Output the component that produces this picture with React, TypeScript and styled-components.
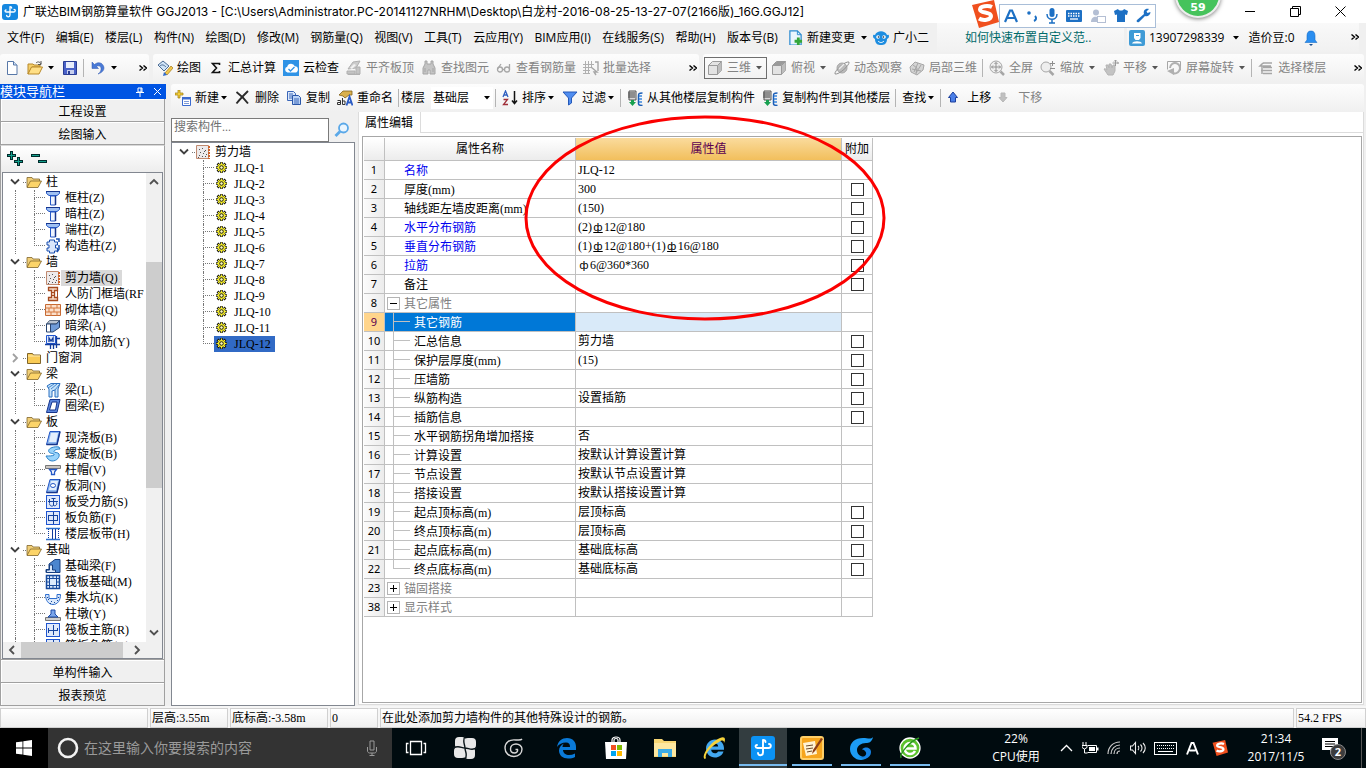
import React from "react";
import styled, { createGlobalStyle } from "styled-components";

const SONG = `"Liberation Serif", "Noto Sans CJK SC", serif`;
const YAHEI = `"Open Sans", "Noto Sans CJK SC", sans-serif`;

const GlobalStyle = createGlobalStyle`
  *, *::before, *::after { box-sizing: border-box; }
  html, body { margin: 0; padding: 0; }
  body { background: #f0f0f0; color: #000; font-family: ${YAHEI}; font-size: 12px; line-height: 16px; }
  button, input { font: inherit; color: inherit; margin: 0; }
  button { border: 0; padding: 0; background: none; text-align: left; white-space: nowrap; }
  a { color: inherit; text-decoration: none; }
  svg { display: block; flex: none; }
`;

/* ---------- icons ---------- */

const B = "#2457c5";
const G = "#a6a6a6";

const slab = (
  <>
    <path d="M5 1.500h10l-3 13H1.500z" fill="#8fb8f0" stroke={B} />
    <path d="M6 3h7l-2 9H4z" fill="#e4effd" />
    <path d="M1.500 14.500h10.500l3-13" fill="none" stroke="#16358c" strokeWidth="1.400" />
  </>
);
const rebarTile = (d: string) => (
  <>
    <rect x="1.500" y="1.500" width="13" height="13" fill="#dfe9fb" stroke="#1f55d0" />
    <path d={d} fill="none" stroke="#15439e" />
  </>
);
const cube = (
  <>
    <path d="M1.500 5.500l4-4h9v9l-4 4h-9z" fill="#e3e3e3" stroke="#9a9a9a" />
    <path d="M10.500 5.500v9l4-4v-9z" fill="#bdbdbd" />
    <path d="M1.500 5.500h9v9M10.500 5.500l4-4" fill="none" stroke="#9a9a9a" />
  </>
);
const floorCopy = (
  <>
    <path d="M2 1h7v9H2z" fill="#d8d8d8" stroke="#555" />
    <path d="M1 3h7M1 5h7M1 7h7" stroke="#444" />
    <path d="M15.500 3c-4 0-4 1-4 3v8c0 1 1 1.500 4 1.500" fill="none" stroke="#1c5fb8" strokeWidth="1.500" />
    <path d="M12 6h3M12 9h3M12 12h3" stroke="#3b86dd" strokeWidth="1.500" />
    <path d="M4 10h3v2h2l-3.500 4L2 12h2z" fill="#18a050" />
  </>
);
const knot = "M12 4v12.500c0 3.500-5 3.500-5 .5M12 12H6.500C4 12 4 9 6 9M12 12h5.500c3 0 3-4 .5-4M12 4c1.500 0 2.500.5 2.500 2";

const ART: Record<string, React.ReactNode> = {
  app: (
    <>
      <rect width="16" height="16" rx="3" fill="#1688e0" />
      <g transform="scale(.667)">
        <path d={knot} fill="none" stroke="#fff" strokeWidth="2" strokeLinecap="round" />
      </g>
    </>
  ),
  newFile: (
    <>
      <path d="M3.500 1.500h6l3.500 3.500v9.500H3.500z" fill="#fff" stroke="#5878a8" />
      <path d="M9.500 1.500V5H13" fill="#cfe0f5" stroke="#5878a8" />
    </>
  ),
  openFolder: (
    <>
      <path d="M1 14V4h5l1 1h6v2H5z" fill="#f5cf6a" stroke="#b8892a" />
      <path d="M1 14l3.500-7H15.500L12 14z" fill="#ffdf86" stroke="#b8892a" />
      <path d="M9 3c2-2 4-1 5 1M14 1v3.500h-3" fill="none" stroke="#555" />
    </>
  ),
  save: (
    <>
      <path d="M1.500 1.500h13v13h-13z" fill="#4a62c8" stroke="#2a3d93" />
      <path d="M4 2h8v6H4z" fill="#e9eefb" />
      <path d="M5 10h7v4H5z" fill="#c7cfee" />
      <path d="M6 11h2v3H6z" fill="#2a3d93" />
    </>
  ),
  undo: <path d="M2 2v6.500h6.500L6.500 6.500c2-1.500 5-.5 4.500 3-.2 2-1.500 3.500-3 4.500 5-1.500 7-5 5.500-8C12 2.500 8 1.500 4.500 4.500z" fill="#4a7ad6" stroke="#2c56b0" strokeWidth=".5" />,
  draw: (
    <>
      <path d="M1 5l5-4 6 5-5 5z" fill="#cfe4f8" stroke="#4a6a92" />
      <path d="M3 6c2-2 4-1 6 1" fill="none" stroke="#4a6a92" />
      <path d="M8 13l6-7 2 2-6 7z" fill="#f2c84a" stroke="#a07618" strokeWidth=".7" />
      <path d="M7 12l3 3-4 1z" fill="#2f6cd0" />
    </>
  ),
  sigma: <path d="M11.500 5V3.500h-7l4 4.500-4 4.500h7V11" fill="none" stroke="#111" strokeWidth="1.600" />,
  cloud: (
    <>
      <rect width="16" height="16" fill="#2f93e6" />
      <path d="M4.500 12.500a3 3 0 01-.3-5.800 4 4 0 017.600-.4 3 3 0 010 6.200z" fill="#fff" />
      <path d="M5.500 9l2 2 4-4" fill="none" stroke="#2f93e6" strokeWidth="1.300" />
    </>
  ),
  flush: (
    <>
      <path d="M2 9l5-7 7-1-4 7z" fill="#ccc" stroke="#b0b0b0" />
      <path d="M4 8l4-4 2 1-4 4z" fill="#f2f2f2" />
      <path d="M1 11h8v3H1zM10 7h4v7h-4zM2 14.500h12" fill="#c4c4c4" stroke="#b0b0b0" />
    </>
  ),
  binoculars: (
    <path d="M4 1h2v3h4V1h2v3l2 4v6H9v-4H7v4H2V8l2-4zM4 8v4M12 8v4" fill="#c4c4c4" stroke={G} />
  ),
  glasses: (
    <g fill="none" stroke={G} strokeWidth="1.300">
      <circle cx="4" cy="9.500" r="2.500" />
      <circle cx="11" cy="9.500" r="2.500" />
      <path d="M1.500 9L5 4M6.500 9.500h2M13.500 9.500V4" />
    </g>
  ),
  batch: (
    <>
      <path d="M2.500 1v13M5.500 1v12M8.500 1v6M0 4.500h11M0 7.500h8M0 10.500h7M0 13.500h7" stroke="#b0b0b0" />
      <path d="M8 7l6 5h-3l2 3M12 2h3v9" fill="none" stroke={G} strokeWidth="1.400" />
    </>
  ),
  cube,
  topView: (
    <>
      {cube}
      <path d="M2 5l4-3.500h8.500l-4 3.500z" fill="#9a9a9a" />
    </>
  ),
  orbit: (
    <>
      <circle cx="8" cy="8" r="5" fill="#bcbcbc" stroke={G} />
      <path d="M1 14C0 11 11 1 15 2c1 3-10 13-14 12z" fill="none" stroke="#929292" />
      <path d="M5 9l5-5" stroke="#eee" strokeWidth="1.500" />
    </>
  ),
  local3d: (
    <>
      <path d="M1 7l5-5 9 3-1 5-6 5-6-3z" fill="#d4d4d4" stroke={G} />
      <path d="M4 5l4 3-1 6M9 3L5 12M12 5l-5 8M3 9l9 2" fill="none" stroke={G} />
    </>
  ),
  fullScreen: (
    <>
      <circle cx="7" cy="7" r="6" fill="#eee" stroke={G} />
      <path d="M7 2.500v9M2.500 7h9M5.500 4L7 2.500 8.500 4M5.500 10L7 11.500 8.500 10M4 5.500L2.500 7 4 8.500M10 5.500L11.500 7 10 8.500" fill="none" stroke="#909090" />
      <path d="M11.500 11.500l3.500 3.500" stroke={G} strokeWidth="2.500" />
    </>
  ),
  zoom: (
    <>
      <circle cx="6" cy="7" r="5" fill="#eee" stroke={G} />
      <path d="M9.500 11l4 4" stroke={G} strokeWidth="2.500" />
      <path d="M10 3.500h5M12.500 1v5M10 8.500h5" stroke="#8e8e8e" />
    </>
  ),
  pan: (
    <>
      <path d="M1 9c2-1 2 1 3 1L3 5h2l1 3V4h2l1 4 1-3h2v6l-2 4H5z" fill="#c3c3c3" stroke="#b4b4b4" />
      <path d="M12.500 0v6M9.500 3h6M11 1.500L12.500 0 14 1.500M14.500 2L15.500 3l-1 1" fill="none" stroke="#9a9a9a" />
    </>
  ),
  rotate: (
    <>
      <path d="M1.500 1.500h13v9M1.500 1.500v8" fill="none" stroke={G} />
      <path d="M4 8a5 5 0 119 3c-1 2-4 3-6 2" fill="none" stroke="#b0b0b0" strokeWidth="2" />
      <path d="M1 11l7-3v7z" fill="#b0b0b0" />
    </>
  ),
  pickFloor: <path d="M5 3h9M5 3L2 6h11M5 7.500h9M3 10.500h11M5 13.500h9M4 6v8" fill="none" stroke={G} strokeWidth="1.500" />,
  newItem: (
    <>
      <path d="M3 0h2v3h3v2H5v3H3V5H0V3h3z" fill="#f4cf3a" stroke="#9b7a10" strokeWidth=".7" />
      <path d="M7.500 7.500h8v8h-8z" fill="#fff" stroke="#3a6ad0" />
      <path d="M7 7h9v2.500H7z" fill="#3a6ad0" />
      <path d="M9 11.500h5M9 13.500h5" stroke="#7f9bd8" />
    </>
  ),
  remove: <path d="M1.500 2C5.500 5 9.500 9 13 13.500M13 1C9 5 5 9 1.500 13.500" fill="none" stroke="#2b2b2b" strokeWidth="1.900" />,
  copy: (
    <>
      <path d="M1.500 1.500h6l2 2v7h-8z" fill="#dbe8fb" stroke="#3a66b8" />
      <path d="M3 4h4M3 6h3M3 8h3" stroke="#3a66b8" />
      <path d="M6.500 5.500h6l2 2v7h-8z" fill="#bcd4f7" stroke="#2a56a8" />
      <path d="M8 9h5M8 11h5M8 13h5" stroke="#3a66b8" />
    </>
  ),
  rename: (
    <>
      <path d="M2 5l4-4h9v4h-3L8 8 6 6z" fill="#d9b04d" stroke="#80601a" strokeWidth=".8" />
      <path d="M.5 10.500h3v4h-3v-2h3M5.500 8v6.500H8V11H5.500" fill="none" stroke="#333" />
      <path d="M9.500 15.500L12.500 6.500l3 9M10.500 12.500h4" fill="none" stroke="#2c5cc4" strokeWidth="1.800" />
    </>
  ),
  sort: (
    <>
      <path d="M1 7l2.500-6L6 7M2 5h3" fill="none" stroke="#2f5fc0" strokeWidth="1.300" />
      <path d="M1.500 9.500h4l-4 5h4.500" fill="none" stroke="#a0303a" strokeWidth="1.300" />
      <path d="M12.500 1v12M10 10.500l2.500 3 2.500-3" fill="none" stroke="#111" strokeWidth="1.500" />
    </>
  ),
  filter: <path d="M1 2h14L9.500 8v5l-3 2V8z" fill="#4f8df0" stroke="#2458b8" />,
  floorCopy,
  up: <path d="M6 2l4.500 5.500H8.500V12h-5V7.500H1.500z" fill="#4a7fe8" stroke="#1c3f9c" />,
  down: <path d="M5 12L1 7.500h2V3h4v4.500h2z" fill="#c0c0c0" stroke="#b8b8b8" />,
  change: (
    <>
      <path d="M2 1h8l4 4v11H2z" fill="#eaf5fd" stroke="#2a8ad0" strokeWidth="1.300" />
      <path d="M10 1v4h4" fill="none" stroke="#2a8ad0" />
      <path d="M9.500 8h3v2.500H15v3h-2.500V16h-3v-2.500H7v-3h2.500z" fill="#35a63a" />
    </>
  ),
  mascot: (
    <>
      <path d="M0 6c0-2 2-1 2-1 2-5 10-5 12 0 0 0 2-1 2 1s-1 2-2 3c0 5-3 6-6 6s-6-1-6-6C1 8 0 8 0 6z" fill="#1d8de0" />
      <circle cx="5" cy="7" r="1.800" fill="#fff" />
      <circle cx="11" cy="7" r="1.800" fill="#fff" />
      <circle cx="5.500" cy="7" r=".8" fill="#123" />
      <circle cx="10.500" cy="7" r=".8" fill="#123" />
      <path d="M5 11c2 2 4 2 6 0" stroke="#fff" fill="none" />
    </>
  ),
  user: (
    <>
      <rect width="16" height="16" rx="2" fill="#3f9bd6" />
      <path d="M5 3h6.500v5l-1.500 2H6.500L5 8z" fill="#fff" />
      <path d="M3 13.500c1-3 9-3 10 0z" fill="#fff" />
      <path d="M7 5.500h3" stroke="#3f9bd6" />
    </>
  ),
  bell: (
    <>
      <path d="M8 1c-3 0-4 2-4 5v4l-2 2.500h12L12 10V6c0-3-1-5-4-5z" fill="#2a8ef0" stroke="#1a6fc8" strokeWidth=".6" />
      <path d="M6 14h4l-2 2z" fill="#1a4f90" />
    </>
  ),
  search: (
    <>
      <circle cx="9.500" cy="6" r="4.500" fill="#eaf5fe" stroke="#5aa8e8" strokeWidth="1.800" />
      <path d="M6 9.500L1.500 14" stroke="#5aa8e8" strokeWidth="2.800" />
    </>
  ),
  /* navigation tree */
  folderOpen: (
    <>
      <path d="M1 13V3.500h5l1 1.500h6.500v2.500" fill="#f1cf78" stroke="#80652a" strokeWidth=".8" />
      <path d="M1 13.500L4.500 7H15.500L12 13.500z" fill="#fcd469" stroke="#80652a" strokeWidth=".8" />
    </>
  ),
  folder: (
    <>
      <path d="M1.500 13.500v-10h5l1 1.500h7v8.500z" fill="#f9cb55" stroke="#80652a" />
      <path d="M2 6h12" stroke="#fdeab2" />
    </>
  ),
  column: (
    <>
      <path d="M1.500 1.500h13v2l-2.500 2H4l-2.500-2z" fill="#9fc0f2" stroke={B} />
      <path d="M5.500 6v9h5V6z" fill="#eef4fe" stroke={B} />
      <path d="M10.500 6v9" stroke="#16358c" strokeWidth="1.500" />
      <path d="M1 1.500h14" stroke="#16358c" />
    </>
  ),
  tieColumn: (
    <>
      <path d="M4.500 2h5v2h3v3h-2v3h2v3h-3v2h-5v-2H2v-3h2V7H2V4h2.500z" fill="#dbe7fb" stroke="#1a4fae" />
      <path d="M11 1h3v3M14 7v4l-2 3" fill="none" stroke="#1a4fae" strokeWidth="1.500" />
    </>
  ),
  shearWall: (
    <>
      <path d="M1.500 1.500h12v13h-12z" fill="#eeeaea" stroke="#c08a70" />
      <path d="M14 2v13" stroke="#d0642a" strokeWidth="2" strokeDasharray="2 1" />
      <path d="M4 5.500h1M7 4.500h1M10 6.500h1M5 8.500h1M8 9.500h1M11 10.500h1M4 11.500h1M7 12.500h1M9 7.500h1M3 13.500h1M10 12.500h1" stroke="#555" />
    </>
  ),
  frameWall: (
    <>
      <path d="M3.500 1.500h9v3h-3v7h3v3h-9v-3h3v-7h-3z" fill="#f7dcc8" stroke="#a64a1e" strokeWidth="1.300" />
      <path d="M12.500 1v14M6 6.500h3M6 9.500h3" stroke="#a64a1e" />
    </>
  ),
  brick: (
    <>
      <path d="M.5 2.500h15v11H.5z" fill="#fbe0cc" stroke="#c66a33" />
      <path d="M1 6h14M1 10h14M6 2v4M12 2v4M4 6v4M9 6v4M6 10v4M12 10v4" stroke="#d5783f" />
    </>
  ),
  beam: (
    <>
      <path d="M1.500 6l3-3.500h10L11 6z" fill="#b7c3d2" stroke="#5a6a80" />
      <path d="M1.500 6h4v8h-4z" fill="#fff" stroke="#26436f" />
      <path d="M5.500 6h6l3-3.500v7L8 14H5.500z" fill="#6f9bd8" stroke="#26436f" />
    </>
  ),
  wallRebar: (
    <>
      <path d="M1.500 1.500h9v8h-9z" fill="#dfe9fb" stroke="#1f55d0" />
      <path d="M4 8V4l2 3 2-3v4M0 10.500h15M11.500 2v12M12 4.500h3M5.500 10v5M8.500 11v4" fill="none" stroke="#123c9c" strokeWidth="1.300" />
    </>
  ),
  beamT: (
    <>
      <path d="M2 4l4-2.500h9L13 7v8h-3V8L7 9v6H4V7z" fill="#c2e2fa" stroke="#2a6fc0" />
      <path d="M3 6l6-4M6 7l6-5M10 8l4-5" stroke="#2a6fc0" strokeWidth=".8" />
    </>
  ),
  ringBeam: (
    <>
      <path d="M5 1.500h10l-3 13H1.500z" fill="#5b86dc" stroke="#16358c" />
      <path d="M7 4h5l-1.500 8h-6z" fill="#fff" stroke="#16358c" />
    </>
  ),
  slab,
  spiral: <path d="M14 1c-6-1-12 2-10 5 1 2 6 1 5 3-1 1-5 1-8 1 1 2 3 5 6 5 5 0 8-4 7-7-1-2-5-1-5-2.500S12 3 15 3z" fill="#9ad4fb" stroke="#2a80c8" />,
  cap: (
    <>
      <path d="M.5 3.500h15v3H.5z" fill="#c9c5c0" stroke="#777" />
      <path d="M4.500 7.500h7L9.500 10v2.500h-3V10z" fill="#fff" stroke={B} strokeWidth="1.300" />
    </>
  ),
  slabHole: (
    <>
      {slab}
      <ellipse cx="8" cy="7.500" rx="2.500" ry="2" fill="#fff" stroke={B} />
    </>
  ),
  rebarS: rebarTile("M3 7.500h10M8.500 4v7.500c-2 1.500-4 0-4-2M8.500 11.500c2 1 4-1 3-3M4.500 5v4M6.500 4.500h4"),
  rebarF: rebarTile("M3 5.500h10M3 10.500h10M8.500 2v12M3.500 5.500v5M12.500 5.500v5"),
  band: (
    <>
      <path d="M1 2.500h14M1 13.500h14" stroke="#2b6fd0" strokeWidth="1.600" />
      <path d="M7.500 3v10M10.500 3v10" stroke="#123c9c" />
      <path d="M3.500 3v10M13.500 3v10" stroke="#123c9c" strokeDasharray="1 1" />
    </>
  ),
  foundationBeam: (
    <>
      <path d="M1 14.500v-3h3V6l6-4.500h5v13z" fill="#4c86cf" stroke="#173f80" />
      <path d="M1.500 12h3V7h3v5h3v2.500h-9z" fill="#dbe9fb" stroke="#173f80" />
    </>
  ),
  raft: (
    <>
      <rect x="1.500" y="1.500" width="13" height="13" fill="#dceafb" stroke="#174a9c" strokeWidth="1.500" />
      <path d="M4.500 1v14M11.500 1v14M1 4.500h14M1 11.500h14M8 1v3M8 12v3M1 8h3M12 8h3" stroke="#174a9c" />
    </>
  ),
  pit: (
    <>
      <path d="M.5 4.500H4v4h8v-4h3.500c0 6-3 10-7.500 10S.5 10.500.5 4.500z" fill="#dbe9fb" stroke="#2f6fd0" />
      <path d="M3 9.500h1M6 11.500h1M9 12.500h1M12 10.500h1M5 13.500h1M2 7.500h1M13 7.500h1" stroke="#174a9c" />
    </>
  ),
  pier: (
    <>
      <path d="M.5 11.500h15v3H.5z" fill="#cfcfcf" stroke="#777" />
      <path d="M3 11l3-3V4h4v4l3 3z" fill="#7aa5ea" stroke="#1b4aa8" />
    </>
  ),
  rebarR: rebarTile("M3.500 8.500h9.500M8.500 3v10M3.500 6v5M12.500 8.500V6"),
  gear: (
    <>
      <path d="M7.500 2v11M2 7.500h11M3.500 3.500l8 8M11.500 3.500l-8 8" stroke="#1c1c10" strokeWidth="2.600" />
      <circle cx="7.500" cy="7.500" r="3.600" fill="#f6ee2c" />
      <path d="M7.500 2.500v10M2.500 7.500h10M4 4l7 7M11 4l-7 7" stroke="#f6ee2c" />
      <circle cx="7.500" cy="7.500" r="1.800" fill="#fbf8b8" stroke="#1c1c10" />
    </>
  ),
};

function Icon({ name, size = 16 }: { name: string; size?: number }) {
  return (
    <svg width={size} height={size} viewBox="0 0 16 16" aria-hidden="true">
      {ART[name]}
    </svg>
  );
}

const CaretSvg = styled.svg<{ $gap: number }>`
  margin-left: ${(p) => p.$gap}px;
`;
function Caret({ color = "#000", gap = 5 }: { color?: string; gap?: number }) {
  return (
    <CaretSvg width="7" height="4" viewBox="0 0 7 4" $gap={gap} aria-hidden="true">
      <path d="M0 0h6L3 3.500z" fill={color} />
    </CaretSvg>
  );
}
function More() {
  return (
    <svg width="8" height="7" viewBox="0 0 8 7" aria-hidden="true">
      <path d="M.5.500l3 2.500-3 2.500M4.500.500l3 2.500-3 2.500" fill="none" stroke="#000" strokeWidth="1.400" />
    </svg>
  );
}
function Chevron({ turn = "down", color = "#404040" }: { turn?: "down" | "up" | "left" | "right"; color?: string }) {
  const paths = {
    down: "M1 2.500l4 4 4-4",
    up: "M1 7l4-4 4 4",
    left: "M7 1L3 5l4 4",
    right: "M3 1l4 4-4 4",
  };
  return (
    <svg width="10" height="10" viewBox="0 0 10 10" aria-hidden="true">
      <path d={paths[turn]} fill="none" stroke={color} strokeWidth="1.800" />
    </svg>
  );
}

/* ---------- window frame ---------- */

const Screen = styled.div`
  position: relative;
  display: flex;
  flex-direction: column;
  height: 100vh;
  overflow: hidden;
`;
const TitleBar = styled.header`
  display: flex;
  align-items: center;
  height: 23px;
  flex: none;
  padding: 0 20px 0 2px;
  gap: 5px;
  background: #fff;
  white-space: nowrap;
`;
const Title = styled.h1`
  flex: 1;
  margin: 0;
  font-size: 12px;
  font-weight: 400;
  font-family: Inter, "Noto Sans CJK SC", sans-serif;
`;
const WindowButtons = styled.div`
  display: flex;
  gap: 34px;
`;

const MenuBar = styled.nav`
  display: flex;
  height: 31px;
  flex: none;
  padding: 0 4px 2px 7px;
  white-space: nowrap;
`;
const MenuList = styled.div`
  display: flex;
  align-items: center;
  justify-content: space-between;
  width: 771px;
  margin-right: 10px;
`;
const MenuExtras = styled.div`
  display: flex;
  align-items: center;
  gap: 5px;
  width: 149px;
`;
const MenuButton = styled.button`
  display: flex;
  align-items: center;
  gap: 4px;
`;
const MenuStrip = styled.div<{ $width?: number }>`
  display: flex;
  align-items: center;
  gap: 8px;
  width: ${(p) => (p.$width ? `${p.$width}px` : "auto")};
  flex: ${(p) => (p.$width ? "none" : "1")};
  margin-right: 3px;
  padding-left: 2px;
  background: linear-gradient(#f9f9f9, #f1f1f1);
`;
const TipLink = styled.a`
  margin-left: 26px;
  color: #006a6a;
`;
const PushEnd = styled.span`
  margin-left: auto;
`;

const ToolRow = styled.div`
  display: flex;
  height: 28px;
  flex: none;
  gap: 4px;
  margin-bottom: 2px;
  padding-right: 2px;
`;
const ToolGroup = styled.div<{ $width?: number; $pad?: number }>`
  display: flex;
  align-items: center;
  width: ${(p) => (p.$width ? `${p.$width}px` : "auto")};
  flex: ${(p) => (p.$width ? "none" : "1")};
  padding: 0 2px 0 ${(p) => p.$pad ?? 0}px;
  background: linear-gradient(#fdfdfd, #f0f0f0);
  border-radius: 3px;
  white-space: nowrap;
`;
const SecondBar = styled(ToolGroup)`
  height: 28px;
  flex: none;
`;
const ToolButton = styled.button<{ $off?: boolean; $pressed?: boolean }>`
  display: flex;
  align-items: center;
  height: 22px;
  padding: 0 3px 0 ${(p) => (p.$pressed ? 2 : 4)}px;
  border: ${(p) => (p.$pressed ? "1px solid #6e6e6e" : "0")};
  color: ${(p) => (p.$off ? "#838383" : "#000")};
`;
const ToolText = styled.span<{ $alone?: boolean }>`
  margin-left: ${(p) => (p.$alone ? 0 : 4)}px;
`;
const ToolSep = styled.span`
  width: 1px;
  height: 18px;
  margin: 0 2px;
  background: #b4b4b4;
`;

type Tool = { icon?: string; text?: string; caret?: boolean; off?: boolean; pressed?: boolean; sep?: boolean };
function Tools({ items, caretGap = 5 }: { items: Tool[]; caretGap?: number }) {
  return (
    <>
      {items.map((t, i) =>
        t.sep ? (
          <ToolSep key={i} />
        ) : (
          <ToolButton key={i} type="button" $off={t.off} $pressed={t.pressed} aria-label={t.text ?? t.icon}>
            {t.icon && <Icon name={t.icon} />}
            {t.text && <ToolText $alone={!t.icon}>{t.text}</ToolText>}
            {t.caret && <Caret gap={caretGap} color={t.off ? "#555" : "#000"} />}
          </ToolButton>
        )
      )}
    </>
  );
}

const MENUS = ["文件(F)", "编辑(E)", "楼层(L)", "构件(N)", "绘图(D)", "修改(M)", "钢筋量(Q)", "视图(V)", "工具(T)", "云应用(Y)", "BIM应用(I)", "在线服务(S)", "帮助(H)", "版本号(B)"];
const FILE_TOOLS: Tool[] = [{ icon: "newFile" }, { icon: "openFolder", caret: true }, { icon: "save" }, { sep: true }, { icon: "undo", caret: true }];
const DRAW_TOOLS: Tool[] = [
  { icon: "draw", text: "绘图" },
  { icon: "sigma", text: "汇总计算" },
  { icon: "cloud", text: "云检查" },
  { icon: "flush", text: "平齐板顶", off: true },
  { icon: "binoculars", text: "查找图元", off: true },
  { icon: "glasses", text: "查看钢筋量", off: true },
  { icon: "batch", text: "批量选择", off: true },
];
const VIEW_TOOLS: Tool[] = [
  { icon: "cube", text: "三维", caret: true, off: true, pressed: true },
  { icon: "topView", text: "俯视", caret: true, off: true },
  { icon: "orbit", text: "动态观察", off: true },
  { icon: "local3d", text: "局部三维", off: true },
  { sep: true },
  { icon: "fullScreen", text: "全屏", off: true },
  { icon: "zoom", text: "缩放", caret: true, off: true },
  { icon: "pan", text: "平移", caret: true, off: true },
  { icon: "rotate", text: "屏幕旋转", caret: true, off: true },
  { sep: true },
  { icon: "pickFloor", text: "选择楼层", off: true },
];

/* ---------- left navigation ---------- */

const Body = styled.main`
  display: flex;
  flex: 1;
  min-height: 0;
  gap: 5px;
  padding-right: 2px;
`;
const Nav = styled.aside`
  display: flex;
  flex-direction: column;
  width: 166px;
  flex: none;
  font-family: ${SONG};
`;
const NavTitle = styled.h2`
  display: flex;
  align-items: center;
  gap: 9px;
  height: 15px;
  margin: 0;
  padding-right: 4px;
  background: #0054e3;
  color: #fff;
  font-size: 13px;
  font-weight: 400;
`;
const NavButton = styled.button`
  height: 23px;
  flex: none;
  margin-right: 1px;
  padding-top: 3px;
  border: 1px solid #a0a0a0;
  border-width: 0 1px 1px;
  box-shadow: inset 1px 1px #fff;
  text-align: center;
`;
const NavBox = styled.section`
  display: flex;
  flex-direction: column;
  flex: 1;
  min-height: 0;
  margin-right: 1px;
  border: 1px solid #a0a0a0;
  border-top-color: #d8d8d8;
`;
const NavTools = styled.div`
  display: flex;
  align-items: center;
  gap: 7px;
  height: 26px;
  flex: none;
  padding-left: 6px;
  background: linear-gradient(#fff, #ededed);
`;
const NavTree = styled.div`
  display: grid;
  grid-template-columns: minmax(0, 1fr) 16px;
  grid-template-rows: minmax(0, 1fr) 16px;
  flex: 1;
  min-height: 0;
  margin: 0 1px;
  border: 1px solid #828790;
  background: #fff;
`;
const TreeView = styled.ul`
  margin: 0;
  padding: 1px 0 0;
  overflow: hidden;
  list-style: none;
`;
const TreeRow = styled.li<{ $pad: number }>`
  display: flex;
  align-items: center;
  height: 16px;
  padding-left: ${(p) => p.$pad}px;
  white-space: nowrap;
`;
const Dash = styled.span`
  width: 3px;
  margin-left: 3px;
  border-top: 1px dotted #777;
`;
const Rail = styled.span`
  width: 19px;
  height: 16px;
  flex: none;
  border-left: 1px dotted #777;
`;
const Elbow = styled.span<{ $last?: boolean }>`
  display: flex;
  flex-direction: column;
  flex: none;
  width: 11px;
  height: 16px;
  &::before, &::after {
    content: "";
    height: 8px;
    border-left: 1px dotted #777;
  }
  &::before { border-bottom: 1px dotted #777; }
  &::after { border-left-color: ${(p) => (p.$last ? "transparent" : "#777")}; }
`;
const TreeText = styled.span<{ $mark?: string }>`
  height: 16px;
  padding: 0 4px;
  background: ${(p) => p.$mark ?? "transparent"};
`;
const Marked = styled.span<{ $on?: boolean }>`
  display: flex;
  background: ${(p) => (p.$on ? "#316ac5" : "transparent")};
`;
const BarV = styled.div`
  display: flex;
  flex-direction: column;
  align-items: center;
  background: #f0f0f0;
  padding: 4px 0;
`;
const BarH = styled.div`
  display: flex;
  align-items: center;
  grid-column: 1 / -1;
  padding-right: 20px;
  background: #f0f0f0;
`;
const ThumbV = styled.div`
  width: 16px;
  height: 49%;
  margin-top: 75px;
  margin-bottom: auto;
  background: #cdcdcd;
`;
const ThumbH = styled.div`
  width: 102px;
  height: 16px;
  margin-left: 4px;
  margin-right: auto;
  background: #cdcdcd;
`;
const ArrowPad = styled.span`
  padding-left: 4px;
`;

type Branch = { name: string; closed?: boolean; items?: [string, string][] };
const TREE: Branch[] = [
  { name: "柱", items: [["column", "框柱(Z)"], ["column", "暗柱(Z)"], ["column", "端柱(Z)"], ["tieColumn", "构造柱(Z)"]] },
  { name: "墙", items: [["shearWall", "剪力墙(Q)"], ["frameWall", "人防门框墙(RF"], ["brick", "砌体墙(Q)"], ["beam", "暗梁(A)"], ["wallRebar", "砌体加筋(Y)"]] },
  { name: "门窗洞", closed: true },
  { name: "梁", items: [["beamT", "梁(L)"], ["ringBeam", "圈梁(E)"]] },
  { name: "板", items: [["slab", "现浇板(B)"], ["spiral", "螺旋板(B)"], ["cap", "柱帽(V)"], ["slabHole", "板洞(N)"], ["rebarS", "板受力筋(S)"], ["rebarF", "板负筋(F)"], ["band", "楼层板带(H)"]] },
  { name: "基础", items: [["foundationBeam", "基础梁(F)"], ["raft", "筏板基础(M)"], ["pit", "集水坑(K)"], ["pier", "柱墩(Y)"], ["rebarR", "筏板主筋(R)"], ["rebarF", "筏板负筋(X)"]] },
];

function NavPanel() {
  return (
    <Nav>
      <NavTitle>
        模块导航栏
        <PushEnd>
          <svg width="8" height="10" viewBox="0 0 8 10"><path d="M2 1h4v4H2zM5 1v4M0 5.500h8M4 6v4" fill="none" stroke="#fff" /></svg>
        </PushEnd>
        <svg width="9" height="9" viewBox="0 0 9 9"><path d="M1 1l7 7M8 1L1 8" stroke="#fff" /></svg>
      </NavTitle>
      <NavButton type="button">工程设置</NavButton>
      <NavButton type="button">绘图输入</NavButton>
      <NavBox>
        <NavTools>
          <svg width="17" height="16" viewBox="0 0 17 16"><path d="M4.500 0v9M0 4.500h9M11.500 6v9M7 10.500h9" stroke="#002b2b" strokeWidth="3" /><path d="M4.500 1v7M1 4.500h7M11.500 7v7M8 10.500h7" stroke="#13a08c" /></svg>
          <svg width="17" height="16" viewBox="0 0 17 16"><path d="M0 4.500h9M7 10.500h9" stroke="#002b2b" strokeWidth="3" /><path d="M1 4.500h7M8 10.500h7" stroke="#13a08c" /></svg>
        </NavTools>
        <NavTree>
          <TreeView>
            {TREE.map((b) => (
              <React.Fragment key={b.name}>
                <TreeRow $pad={7}>
                  <Chevron turn={b.closed ? "right" : "down"} color={b.closed ? "#a0a0a0" : "#404040"} />
                  <Dash />
                  <Icon name={b.closed ? "folder" : "folderOpen"} />
                  <TreeText>{b.name}</TreeText>
                </TreeRow>
                {b.items?.map(([icon, text], i) => (
                  <TreeRow key={text} $pad={12}>
                    <Rail />
                    <Elbow $last={i === b.items!.length - 1 && b.name !== "基础"} />
                    <Icon name={icon} />
                    <TreeText $mark={text === "剪力墙(Q)" ? "#d9d9d9" : undefined}>{text}</TreeText>
                  </TreeRow>
                ))}
              </React.Fragment>
            ))}
          </TreeView>
          <BarV>
            <Chevron turn="up" color="#505050" />
            <ThumbV />
            <Chevron color="#505050" />
          </BarV>
          <BarH>
            <ArrowPad><Chevron turn="left" color="#505050" /></ArrowPad>
            <ThumbH />
            <Chevron turn="right" color="#505050" />
          </BarH>
        </NavTree>
      </NavBox>
      <NavButton type="button">单构件输入</NavButton>
      <NavButton type="button">报表预览</NavButton>
    </Nav>
  );
}

/* ---------- component list ---------- */

const Work = styled.div`
  display: flex;
  flex-direction: column;
  flex: 1;
  min-width: 0;
`;
const Panels = styled.div`
  display: flex;
  flex: 1;
  min-height: 0;
  gap: 3px;
`;
const FloorLabel = styled.label`
  display: flex;
  align-items: center;
  gap: 6px;
`;
const FloorBox = styled.span`
  display: flex;
  align-items: center;
  width: 62px;
  height: 22px;
  padding-right: 2px;
  background: #fff;
`;
const FloorSelect = styled.select`
  flex: 1;
  min-width: 0;
  padding: 0 2px;
  border: 0;
  appearance: none;
  background: transparent;
  font: inherit;
`;
const ListPanel = styled.section`
  display: flex;
  flex-direction: column;
  width: 184px;
  flex: none;
  padding-top: 5px;
`;
const SearchRow = styled.div`
  display: flex;
  align-items: center;
  gap: 5px;
  height: 25px;
  flex: none;
`;
const SearchInput = styled.input`
  width: 158px;
  height: 24px;
  padding: 0 2px 4px;
  border: 1px solid #7a7a7a;
  background: #fff;
  font-family: ${SONG};
  &::placeholder { color: #707070; opacity: 1; }
`;
const ListBox = styled.div`
  flex: 1;
  min-height: 0;
  overflow: hidden;
  border: 1px solid #828790;
  background: #fff;
  font-family: ${SONG};
`;

const COMPONENTS = Array.from({ length: 12 }, (_, i) => `JLQ-${i + 1}`);

function ComponentList() {
  return (
    <ListPanel>
      <SearchRow>
        <SearchInput aria-label="搜索构件" placeholder="搜索构件..." />
        <button type="button" aria-label="搜索"><Icon name="search" /></button>
      </SearchRow>
      <ListBox>
        <TreeView>
          <TreeRow $pad={7}>
            <Chevron />
            <Dash />
            <Icon name="shearWall" />
            <TreeText>剪力墙</TreeText>
          </TreeRow>
          {COMPONENTS.map((name, i) => (
            <TreeRow key={name} $pad={31}>
              <Elbow $last={i === COMPONENTS.length - 1} />
              <Marked $on={i === COMPONENTS.length - 1}>
                <Icon name="gear" />
                <TreeText>{name}</TreeText>
              </Marked>
            </TreeRow>
          ))}
        </TreeView>
      </ListBox>
    </ListPanel>
  );
}

/* ---------- property sheet ---------- */

const SheetPanel = styled.section`
  position: relative;
  display: flex;
  flex-direction: column;
  flex: 1;
  min-width: 0;
  margin-bottom: 1px;
  border: 1px solid #dcdcdc;
  border-top: 0;
  background: #fff;
  font-family: ${SONG};
`;
const TabStrip = styled.div`
  display: flex;
  height: 21px;
  flex: none;
`;
const Tab = styled.button`
  padding: 0 7px 0 6px;
  border-right: 1px solid #dcdcdc;
`;
const TabRest = styled.div`
  flex: 1;
  border-bottom: 1px solid #dcdcdc;
`;
const SheetBox = styled.div`
  flex: 1;
  min-height: 0;
  margin: 3px 1px 1px 3px;
  padding: 1px;
  overflow: hidden;
  border: 1px solid #a7a7a7;
`;
const Sheet = styled.table`
  width: 509px;
  table-layout: fixed;
  border-spacing: 0;
  line-height: 18px;
`;
const HeadCell = styled.th<{ $width: number; $hot?: boolean }>`
  width: ${(p) => p.$width}px;
  height: 23px;
  padding: 0;
  border: 1px solid #c0c0c0;
  border-width: 0 1px 1px 0;
  background: ${(p) => (p.$hot ? "linear-gradient(#fadb9d, #f2bf5c)" : "linear-gradient(#fff, #ececec)")};
  color: ${(p) => (p.$hot ? "#5a0050" : "#000")};
  font-weight: 400;
`;
const NumCell = styled.th<{ $on?: boolean }>`
  height: 19px;
  padding: 0;
  border: 1px solid #c0c0c0;
  border-width: 0 1px 1px 0;
  background: ${(p) => (p.$on ? "#ffd58c" : "linear-gradient(90deg, #fbfbfb, #ececec)")};
  color: ${(p) => (p.$on ? "#5a0050" : "#000")};
  font: 400 11px/18px "Noto Sans", sans-serif;
  text-align: center;
`;
const Cell = styled.td<{ $fill?: string }>`
  height: 19px;
  padding: 0;
  border: 1px solid #c0c0c0;
  border-width: 0 1px 1px 0;
  background: ${(p) => p.$fill ?? "#fff"};
  white-space: nowrap;
  overflow: hidden;
`;
const NameLine = styled.div<{ $pad: number; $color?: string }>`
  display: flex;
  align-items: center;
  gap: 4px;
  height: 18px;
  padding-left: ${(p) => p.$pad}px;
  color: ${(p) => p.$color ?? "#000"};
`;
const NameText = styled.span`
  line-height: 16px;
  padding-top: 2px;
`;
const Branchlet = styled.span<{ $last?: boolean }>`
  display: flex;
  flex-direction: column;
  width: 17px;
  height: 18px;
  &::before, &::after {
    content: "";
    height: 9px;
    border-left: 1px solid #c0c0c0;
  }
  &::before { border-bottom: 1px solid #c0c0c0; }
  &::after { border-left-color: ${(p) => (p.$last ? "transparent" : "#c0c0c0")}; }
`;
const ExpandButton = styled.button`
  width: 13px;
  height: 13px;
  border: 1px solid #b4b4b4;
  background: #fff;
`;
const ValueLine = styled.div`
  height: 18px;
  padding-left: 2px;
`;
const Grade = styled.span<{ $ribbed?: boolean }>`
  display: inline-block;
  width: 12px;
  height: 13px;
  font-family: "DejaVu Sans", sans-serif;
  font-size: 11px;
  line-height: 13px;
  text-align: center;
  text-decoration: ${(p) => (p.$ribbed ? "underline" : "none")};
  text-decoration-skip-ink: none;
  text-underline-offset: 1px;
`;
const CheckLine = styled.div`
  display: flex;
  align-items: center;
  justify-content: center;
  height: 18px;
`;
const Check = styled.input`
  width: 13px;
  height: 13px;
  border: 1px solid #333;
  appearance: none;
  background: #fff;
`;
const Ring = styled.svg`
  position: absolute;
  top: 3px;
  left: 165px;
  pointer-events: none;
`;

type Row = { n: number; name: string; value?: React.ReactNode; check?: boolean; blue?: boolean; group?: "+" | "-"; child?: boolean; on?: boolean };
const ribbed = <Grade $ribbed>ф</Grade>;
const ROWS: Row[] = [
  { n: 1, name: "名称", value: "JLQ-12", blue: true },
  { n: 2, name: "厚度(mm)", value: "300", check: true },
  { n: 3, name: "轴线距左墙皮距离(mm)", value: "(150)", check: true },
  { n: 4, name: "水平分布钢筋", value: <>(2){ribbed}12@180</>, check: true, blue: true },
  { n: 5, name: "垂直分布钢筋", value: <>(1){ribbed}12@180+(1){ribbed}16@180</>, check: true, blue: true },
  { n: 6, name: "拉筋", value: <><Grade>ф</Grade>6@360*360</>, check: true, blue: true },
  { n: 7, name: "备注", check: true },
  { n: 8, name: "其它属性", group: "-" },
  { n: 9, name: "其它钢筋", child: true, on: true },
  { n: 10, name: "汇总信息", value: "剪力墙", child: true, check: true },
  { n: 11, name: "保护层厚度(mm)", value: "(15)", child: true, check: true },
  { n: 12, name: "压墙筋", child: true, check: true },
  { n: 13, name: "纵筋构造", value: "设置插筋", child: true, check: true },
  { n: 14, name: "插筋信息", child: true, check: true },
  { n: 15, name: "水平钢筋拐角增加搭接", value: "否", child: true },
  { n: 16, name: "计算设置", value: "按默认计算设置计算", child: true },
  { n: 17, name: "节点设置", value: "按默认节点设置计算", child: true },
  { n: 18, name: "搭接设置", value: "按默认搭接设置计算", child: true },
  { n: 19, name: "起点顶标高(m)", value: "层顶标高", child: true, check: true },
  { n: 20, name: "终点顶标高(m)", value: "层顶标高", child: true, check: true },
  { n: 21, name: "起点底标高(m)", value: "基础底标高", child: true, check: true },
  { n: 22, name: "终点底标高(m)", value: "基础底标高", child: true, check: true },
  { n: 23, name: "锚固搭接", group: "+" },
  { n: 38, name: "显示样式", group: "+" },
];

function PropertySheet() {
  return (
    <SheetPanel>
      <TabStrip role="tablist">
        <Tab type="button" role="tab" aria-selected="true">属性编辑</Tab>
        <TabRest />
      </TabStrip>
      <SheetBox>
        <Sheet>
          <thead>
            <tr>
              <HeadCell $width={21} aria-label="行号" />
              <HeadCell $width={191}>属性名称</HeadCell>
              <HeadCell $width={266} $hot>属性值</HeadCell>
              <HeadCell $width={31}>附加</HeadCell>
            </tr>
          </thead>
          <tbody>
            {ROWS.map((r) => (
              <tr key={r.n}>
                <NumCell $on={r.on}>{r.n}</NumCell>
                <Cell $fill={r.on ? "#0078d7" : undefined}>
                  <NameLine $pad={r.group ? 2 : r.child ? 8 : 19} $color={r.on ? "#fff" : r.group ? "#808080" : r.blue ? "#0000f0" : undefined}>
                    {r.group && (
                      <ExpandButton type="button" aria-label={r.name}>
                        <svg width="11" height="11" viewBox="0 0 11 11">
                          <path d={r.group === "+" ? "M2 5.500h7M5.500 2v7" : "M2 5.500h7"} stroke="#000" />
                        </svg>
                      </ExpandButton>
                    )}
                    {r.child && <Branchlet $last={r.n === 22} />}
                    <NameText>{r.name}</NameText>
                  </NameLine>
                </Cell>
                <Cell $fill={r.on ? "#d9eaf9" : undefined}>
                  <ValueLine>{r.value}</ValueLine>
                </Cell>
                <Cell>
                  <CheckLine>{r.check && <Check type="checkbox" aria-label={`附加 ${r.name}`} />}</CheckLine>
                </Cell>
              </tr>
            ))}
          </tbody>
        </Sheet>
      </SheetBox>
      <Ring width="364" height="206" viewBox="0 0 364 206" aria-hidden="true">
        <ellipse cx="181" cy="103" rx="179" ry="101" fill="none" stroke="#fb0000" strokeWidth="3" />
      </Ring>
    </SheetPanel>
  );
}

/* ---------- status bar ---------- */

const StatusBar = styled.footer`
  display: flex;
  gap: 2px;
  height: 22px;
  flex: none;
  padding-top: 2px;
  background: #f6f6f6;
  font-family: ${SONG};
`;
const StatusCell = styled.div<{ $width?: number }>`
  width: ${(p) => (p.$width ? `${p.$width}px` : "auto")};
  flex: ${(p) => (p.$width ? "none" : "1")};
  padding: 1px;
  border: 1px solid #d0d0d0;
  background: linear-gradient(#fff, #f0f0f0);
  white-space: nowrap;
`;

/* ---------- desktop task bar ---------- */

const TaskBar = styled.footer`
  display: flex;
  height: 40px;
  flex: none;
  background: #000b0f;
  color: #fff;
`;
const StartButton = styled.button`
  display: flex;
  align-items: center;
  justify-content: center;
  width: 48px;
  background: #000;
`;
const Cortana = styled.label`
  display: flex;
  align-items: center;
  gap: 5px;
  width: 344px;
  padding: 0 14px 0 9px;
  background: #333;
`;
const CortanaInput = styled.input`
  flex: 1;
  min-width: 0;
  padding: 0;
  border: 0;
  background: transparent;
  font-size: 14px;
  &::placeholder { color: #9a9a9a; opacity: 1; }
`;
const TaskGroup = styled.div`
  display: flex;
  gap: 1px;
  margin-right: 5px;
`;
const TaskButton = styled.button<{ $active?: boolean; $open?: boolean }>`
  display: flex;
  flex-direction: column;
  align-items: center;
  justify-content: center;
  width: 48px;
  height: 40px;
  background: ${(p) => (p.$active ? "#333d40" : "transparent")};
  &::after {
    content: "";
    width: ${(p) => (p.$active ? 48 : 40)}px;
    height: 2px;
    margin-bottom: -6px;
    margin-top: 4px;
    background: ${(p) => (p.$open ? "#76b9ed" : "transparent")};
  }
`;
const Tray = styled.div`
  display: flex;
  align-items: stretch;
  margin-left: auto;
  padding-right: 4px;
`;
const TraySlot = styled.div<{ $width: number }>`
  display: flex;
  align-items: center;
  justify-content: center;
  width: ${(p) => p.$width}px;
  text-align: center;
  line-height: 18px;
`;
const ShowDesktop = styled.span`
  width: 1px;
  margin-left: 9px;
  background: #555;
`;

const taskArt: Record<string, React.ReactNode> = {
  taskView: (
    <svg width="22" height="16" viewBox="0 0 22 16"><path d="M5.500 1.500h11v13h-11zM3.500 3.500h-2v9h2M18.500 3.500h2v9h-2" fill="none" stroke="#fff" strokeWidth="1.300" /></svg>
  ),
  flower: (
    <svg width="24" height="24" viewBox="0 0 24 24">
      <g fill="#e8e8e8">
        <rect x="2" y="1" width="11" height="12" rx="4" />
        <rect x="11" y="2" width="12" height="11" rx="4" />
        <rect x="11" y="11" width="11" height="12" rx="4" />
        <rect x="1" y="11" width="12" height="11" rx="4" />
      </g>
      <path d="M12 12C12 8 9 6 12 0M12 12c4 0 6 3 12 0M12 12c0 4 3 6 0 12M12 12c-4 0-6-3-12 0" fill="none" stroke="#0a1519" strokeWidth="1.400" />
    </svg>
  ),
  swirl: (
    <svg width="24" height="24" viewBox="0 0 24 24"><path d="M20 3c-1 1.500-3 1-6 1C7 3 3 7 3 12c0 5 4 8.500 9 8.500S20 17 20 13c0-3-3-5-6-5s-5.500 2-5.500 5 2 4 4 4 3.500-1.500 3-3.500h-2" fill="none" stroke="#d8d8d8" strokeWidth="1.400" /></svg>
  ),
  edge: (
    <svg width="22" height="22" viewBox="0 0 22 22"><path d="M1 10C2 4 6 1 11 1c6 0 9 4 9 9v3H7c0 3 3 5 6 5 2 0 4-.5 6-1.500V20c-2 1-4 1.500-7 1.500-5 0-9-3-9-8 0-3 2-5.500 5-7-1 1-1.500 2-1.500 3.500H14c0-3-1-4.500-4-4.500C6 5.500 3 7 1 10z" fill="#0a7ad8" /></svg>
  ),
  store: (
    <svg width="24" height="24" viewBox="0 0 24 24"><path d="M8 7V4c0-4 8-4 8 0v3M10 6V4c0-2 4-2 4 0v2" fill="none" stroke="#fff" strokeWidth="1.200" /><path d="M1 6h22l-1 17H2z" fill="#fff" /><path d="M7 9h5v5H7z" fill="#f25022" /><path d="M13 9h5v5h-5z" fill="#7fba00" /><path d="M7 15h5v5H7z" fill="#00a4ef" /><path d="M13 15h5v5h-5z" fill="#ffb900" /></svg>
  ),
  explorer: (
    <svg width="22" height="20" viewBox="0 0 22 20"><path d="M0 1h8l2 2h12v16H0z" fill="#f7d674" /><path d="M0 5h22v13H0z" fill="#fde7a0" /><path d="M4 19v-8h14v8h-4v-4H8v4z" fill="#3cabe6" /></svg>
  ),
  ie: (
    <svg width="24" height="24" viewBox="0 0 24 24"><path d="M13 3.500c-5 0-9 4-9 9s4 9 9 9c4 0 7.500-2.500 8.500-6H16c-.5 1-1.500 1.800-3 1.800-2.200 0-3.800-1.500-3.800-3.500H22C22.500 8 19 3.500 13 3.500zM9.500 10.500c.5-2 1.500-3 3.500-3s3 1 3.200 3z" fill="#43a8f0" /><path d="M3 23C-2 21 8 6 18 2c5-2 6 1 4 5 0-3-2-3-5-1C9 10 2 19 4 22z" fill="#f6d33c" /></svg>
  ),
  glodon: (
    <svg width="24" height="24" viewBox="0 0 24 24"><rect width="24" height="24" rx="3" fill="#0b92f4" /><path d={knot} fill="none" stroke="#fff" strokeWidth="1.900" strokeLinecap="round" /></svg>
  ),
  note: (
    <svg width="24" height="24" viewBox="0 0 24 24"><rect x="1" y="1" width="22" height="22" rx="2" fill="#f6a51c" stroke="#ffcf67" strokeWidth="2" /><path d="M3 7l12-2 2 13-11 2z" fill="#fff3d4" /><path d="M6 10l7-1M6 13l7-1M7 16l5-1" stroke="#6b4a2c" /><path d="M21 2l-8 12-1 4 3-3 8-12z" fill="#8c3d16" /></svg>
  ),
  swirlBlue: (
    <svg width="24" height="24" viewBox="0 0 24 24">
      <path d="M24 1c-2 2.500-5 1-10 1C6 2 1 6.500 1 13c0 6 5 11 11 11 2 0 5-1 7-3-6 1-11-2-11-7 0-4 4-7 9-7 3 0 6-1 7-6z" fill="#1c9cf4" />
      <path d="M13 13.500c3-3.500 9-2 9 2.500 0 3-2 5.500-5 6.500-2 .5-6 0-7-2 4 1 8-.5 7-4-.5-1.500-2-3-4-3z" fill="#1583e6" />
    </svg>
  ),
  greenE: (
    <svg width="24" height="24" viewBox="0 0 24 24"><circle cx="12" cy="12" r="10" fill="#5cc22e" stroke="#fff" strokeWidth="1.300" /><path d="M17 15c-1 2-3 3-5 3-3 0-5.500-2.500-5.500-5.500S9 7 12 7s5.500 2 5.500 5.500H8" fill="none" stroke="#fff" strokeWidth="2.500" /><path d="M3 22C1 18 12 5 21 2" fill="none" stroke="#2c9a20" strokeWidth="1.500" /></svg>
  ),
};

/* ---------- floating input bar ---------- */

const ImeBar = styled.div`
  position: absolute;
  top: 0;
  right: 210px;
  display: flex;
  align-items: center;
`;
const ImeTools = styled.div`
  display: flex;
  align-items: center;
  justify-content: space-around;
  width: 157px;
  height: 24px;
  margin-top: 3px;
  border: 1px solid #a9bed8;
  background: #fff;
`;
const Ball = styled.div`
  position: absolute;
  top: -28px;
  right: 145px;
  display: flex;
  align-items: flex-end;
  justify-content: center;
  width: 46px;
  height: 46px;
  border: 2px solid #eee;
  border-radius: 50%;
  background: #46c35c;
  box-shadow: 0 1px 4px rgba(0, 0, 0, 0.5);
  color: #fff;
  font: 700 11px/16px "DejaVu Sans", sans-serif;
`;

function SogouMark({ size }: { size: number }) {
  return (
    <svg width={size} height={size} viewBox="0 0 28 28" aria-hidden="true">
      <path d="M1 5L23 0l5 22-20 6z" fill="#f0501e" />
      <path d="M21 7c-4-2-12-1-12 2.500 0 4 11 2 11 6.500 0 4-8 5-12 2.500" fill="none" stroke="#fff" strokeWidth="4" />
    </svg>
  );
}

function Ime() {
  const c = "#1d70c4";
  return (
    <ImeBar>
      <SogouMark size={28} />
      <ImeTools>
        <svg width="14" height="14" viewBox="0 0 14 14"><path d="M1 13L6 1.500h2L13 13M3.500 9h7" fill="none" stroke={c} strokeWidth="2.200" /></svg>
        <svg width="12" height="14" viewBox="0 0 12 14"><circle cx="3" cy="4" r="1.800" fill={c} /><path d="M9 7c2 2 1 4-1 5" fill="none" stroke={c} strokeWidth="2" /></svg>
        <svg width="12" height="16" viewBox="0 0 12 16"><rect x="3.500" y="0" width="5" height="9" rx="2.500" fill={c} /><path d="M1 6c0 7 10 7 10 0M6 11v4M3 15h6" fill="none" stroke={c} strokeWidth="1.500" /></svg>
        <svg width="16" height="12" viewBox="0 0 16 12"><rect width="16" height="12" rx="1" fill={c} /><path d="M2 3.500h12M2 6h12" stroke="#fff" strokeWidth="1.300" strokeDasharray="1.500 1" /><path d="M4 9h8" stroke="#fff" strokeWidth="1.300" /></svg>
        <svg width="16" height="14" viewBox="0 0 16 14"><circle cx="6" cy="3.500" r="3" fill="#b4bfd4" /><path d="M1 13c0-7 9-7 9 0z" fill="#b4bfd4" /><rect x="7.500" y="7.500" width="8" height="6" fill="#fff" stroke="#b4bfd4" /></svg>
        <svg width="14" height="13" viewBox="0 0 14 13"><path d="M4 0c1 2 5 2 6 0l4 2-1 4-2-.5V13H3V5.500L1 6 0 2z" fill={c} /></svg>
        <svg width="15" height="15" viewBox="0 0 15 15"><path d="M1 12l7-6c-1-3 1-6 5-5l-2.500 2.500 1 1.500 3-1c0 3-3 5-5.500 4L3 14c-2 1-3-1-2-2z" fill={c} /></svg>
      </ImeTools>
    </ImeBar>
  );
}

export default function App() {
  return (
    <Screen>
      <GlobalStyle />
      <TitleBar>
        <Icon name="app" />
        <Title>广联达BIM钢筋算量软件 GGJ2013 - [C:\Users\Administrator.PC-20141127NRHM\Desktop\白龙村-2016-08-25-13-27-07(2166版)_16G.GGJ12]</Title>
        <WindowButtons>
          <button type="button" aria-label="最小化"><svg width="11" height="11" viewBox="0 0 11 11"><path d="M0 5.500h10" stroke="#000" /></svg></button>
          <button type="button" aria-label="还原"><svg width="11" height="11" viewBox="0 0 11 11"><path d="M.5 2.500h8v8h-8zM2.500 2V.5h8v8H9" fill="none" stroke="#000" /></svg></button>
          <button type="button" aria-label="关闭"><svg width="11" height="11" viewBox="0 0 11 11"><path d="M.5.500l10 10M10.500.500l-10 10" stroke="#000" /></svg></button>
        </WindowButtons>
      </TitleBar>

      <MenuBar>
        <MenuList>
          {MENUS.map((m) => (
            <MenuButton key={m} type="button">{m}</MenuButton>
          ))}
        </MenuList>
        <MenuExtras>
          <MenuButton type="button"><Icon name="change" size={15} />新建变更<Caret gap={2} /></MenuButton>
          <MenuButton type="button"><Icon name="mascot" />广小二</MenuButton>
        </MenuExtras>
        <MenuStrip $width={187}>
          <TipLink href="#tip">如何快速布置自定义范..</TipLink>
        </MenuStrip>
        <MenuStrip>
          <MenuButton type="button"><Icon name="user" />13907298339<Caret gap={5} /></MenuButton>
          <span>造价豆:0</span>
          <Icon name="bell" />
          <PushEnd><More /></PushEnd>
        </MenuStrip>
      </MenuBar>

      <ToolRow>
        <ToolGroup $width={149} $pad={0}>
          <Tools items={FILE_TOOLS} />
          <PushEnd><More /></PushEnd>
        </ToolGroup>
        <ToolGroup $width={546} $pad={0}>
          <Tools items={DRAW_TOOLS} />
          <PushEnd><More /></PushEnd>
        </ToolGroup>
        <ToolGroup $pad={1}>
          <Tools items={VIEW_TOOLS} />
          <PushEnd><More /></PushEnd>
        </ToolGroup>
      </ToolRow>

      <Body>
        <NavPanel />
        <Work>
          <SecondBar $pad={0}>
            <Tools
              caretGap={2}
              items={[
                { icon: "newItem", text: "新建", caret: true },
                { icon: "remove", text: "删除" },
                { icon: "copy", text: "复制" },
                { icon: "rename", text: "重命名" },
                { sep: true },
              ]}
            />
            <FloorLabel>
              楼层
              <FloorBox>
                <FloorSelect defaultValue="base">
                  <option value="base">基础层</option>
                </FloorSelect>
                <Caret gap={0} />
              </FloorBox>
            </FloorLabel>
            <Tools
              caretGap={2}
              items={[
                { sep: true },
                { icon: "sort", text: "排序", caret: true },
                { icon: "filter", text: "过滤", caret: true },
                { sep: true },
                { icon: "floorCopy", text: "从其他楼层复制构件" },
                { icon: "floorCopy", text: "复制构件到其他楼层" },
                { sep: true },
                { text: "查找", caret: true },
                { sep: true },
                { icon: "up", text: "上移" },
                { icon: "down", text: "下移", off: true },
              ]}
            />
          </SecondBar>
          <Panels>
            <ComponentList />
            <PropertySheet />
          </Panels>
        </Work>
      </Body>

      <StatusBar>
        <StatusCell $width={148} />
        <StatusCell $width={78}>层高:3.55m</StatusCell>
        <StatusCell $width={98}>底标高:-3.58m</StatusCell>
        <StatusCell $width={48}>0</StatusCell>
        <StatusCell>在此处添加剪力墙构件的其他特殊设计的钢筋。</StatusCell>
        <StatusCell $width={70}>54.2 FPS</StatusCell>
      </StatusBar>

      <TaskBar>
        <StartButton type="button" aria-label="开始">
          <svg width="16" height="16" viewBox="0 0 16 16"><path d="M0 2.300L6.500 1.400v6.200H0zM7.300 1.300L16 0v7.600H7.300zM0 8.400h6.500v6.200L0 13.700zM7.300 8.400H16V16l-8.700-1.300z" fill="#fff" /></svg>
        </StartButton>
        <Cortana>
          <svg width="22" height="22" viewBox="0 0 22 22"><circle cx="11" cy="11" r="9" fill="none" stroke="#f2f2f2" strokeWidth="2.600" /></svg>
          <CortanaInput aria-label="搜索" placeholder="在这里输入你要搜索的内容" />
          <svg width="12" height="16" viewBox="0 0 12 16"><path d="M4 1h4v9H4zM1.500 7v4c0 1 1 2 2 2h5c1 0 2-1 2-2V7M6 13v2.500M3.500 15.500h5" fill="none" stroke="#9a9a9a" /></svg>
        </Cortana>
        <TaskGroup>
          {["taskView", "flower", "swirl"].map((k) => (
            <TaskButton key={k} type="button" aria-label={k}>{taskArt[k]}</TaskButton>
          ))}
        </TaskGroup>
        <TaskGroup>
          {["edge", "store", "explorer", "ie", "glodon", "note", "swirlBlue", "greenE"].map((k, i) => (
            <TaskButton key={k} type="button" aria-label={k} $active={k === "glodon"} $open={i > 3}>{taskArt[k]}</TaskButton>
          ))}
        </TaskGroup>
        <Tray>
          <TraySlot $width={76}>22%<br />CPU使用</TraySlot>
          <TraySlot $width={24}><svg width="13" height="8" viewBox="0 0 13 8"><path d="M1 7l5.500-5.500L12 7" fill="none" stroke="#fff" strokeWidth="1.300" /></svg></TraySlot>
          <TraySlot $width={24}><svg width="17" height="12" viewBox="0 0 17 12"><path d="M5.500 3.500h9v7h-9" fill="none" stroke="#fff" /><path d="M7 5h6v4H7zM15 5.500h1.500v3H15z" fill="#fff" /><path d="M1 0v3M4 0v3M0 3.500h5v2L2.500 7 0 5.500zM2.500 7v4h3" fill="none" stroke="#fff" /></svg></TraySlot>
          <TraySlot $width={24}><svg width="14" height="14" viewBox="0 0 14 14"><path d="M1 13C1 6 6 1 13 1M4 13c0-5 4-9 9-9M7 13c0-3.500 2.500-6 6-6M10 13c0-2 1-3 3-3" fill="none" stroke="#ccc" strokeWidth="1.200" /></svg></TraySlot>
          <TraySlot $width={24}><svg width="17" height="14" viewBox="0 0 17 14"><path d="M.5 5h2l3-3.500v11L2.500 9h-2zM8 5c1 1 1 3 0 4M10.500 3.500c2 2 2 5 0 7M13 2c3 3 3 7 0 10" fill="none" stroke="#eee" strokeWidth="1.100" /></svg></TraySlot>
          <TraySlot $width={30}><svg width="23" height="13" viewBox="0 0 23 13"><rect x=".5" y=".5" width="22" height="12" fill="none" stroke="#fff" /><path d="M3 3.500h17M3 6.500h17" stroke="#fff" strokeDasharray="1 1" /><path d="M4 9.500h15" stroke="#fff" /></svg></TraySlot>
          <TraySlot $width={24}><svg width="13" height="13" viewBox="0 0 13 13"><path d="M1 12.500L5.500 1h2L12 12.500M3.500 8.500h6" fill="none" stroke="#fff" strokeWidth="1.900" /></svg></TraySlot>
          <TraySlot $width={32}><SogouMark size={16} /></TraySlot>
          <TraySlot $width={80}>21:34<br />2017/11/5</TraySlot>
          <TraySlot $width={36}>
            <svg width="26" height="26" viewBox="0 0 26 26">
              <path d="M1 3h16v12h-4l-4 4v-4H1z" fill="#fff" />
              <path d="M4 6.500h10M4 9h10M4 11.500h10" stroke="#000" />
              <circle cx="17" cy="17" r="7.500" fill="#3c3c3c" stroke="#888" />
              <text x="17" y="21" textAnchor="middle" fontSize="11" fontWeight="700" fontFamily="Open Sans" fill="#fff">2</text>
            </svg>
          </TraySlot>
          <ShowDesktop />
        </Tray>
      </TaskBar>

      <Ime />
      <Ball>59</Ball>
    </Screen>
  );
}
